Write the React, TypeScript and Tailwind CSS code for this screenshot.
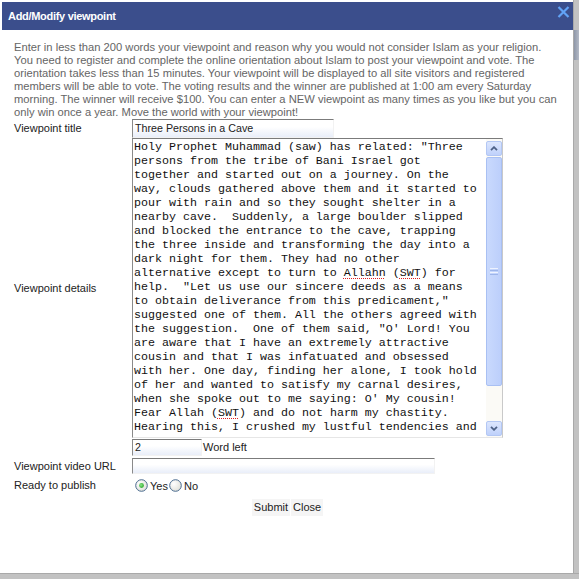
import React from "react";

const SP = ({ children }: { children: React.ReactNode }) => (
  <span className="underline decoration-dotted decoration-[#e02020] underline-offset-[2px]">{children}</span>
);

const textLines: React.ReactNode[] = [
  'Holy Prophet Muhammad (saw) has related: "Three',
  "persons from the tribe of Bani Israel got",
  "together and started out on a journey. On the",
  "way, clouds gathered above them and it started to",
  "pour with rain and so they sought shelter in a",
  "nearby cave.  Suddenly, a large boulder slipped",
  "and blocked the entrance to the cave, trapping",
  "the three inside and transforming the day into a",
  "dark night for them. They had no other",
  <>alternative except to turn to <SP>Allahn</SP> (<SP>SWT</SP>) for</>,
  'help.  "Let us use our sincere deeds as a means',
  'to obtain deliverance from this predicament,"',
  "suggested one of them. All the others agreed with",
  'the suggestion.  One of them said, "O\' Lord! You',
  "are aware that I have an extremely attractive",
  "cousin and that I was infatuated and obsessed",
  "with her. One day, finding her alone, I took hold",
  "of her and wanted to satisfy my carnal desires,",
  "when she spoke out to me saying: O' My cousin!",
  <>Fear Allah (<SP>SWT</SP>) and do not harm my chastity.</>,
  "Hearing this, I crushed my lustful tendencies and",
];

const intro = [
  "Enter in less than 200 words your viewpoint and reason why you would not consider Islam as your religion.",
  "You need to register and complete the online orientation about Islam to post your viewpoint and vote. The",
  "orientation takes less than 15 minutes. Your viewpoint will be displayed to all site visitors and registered",
  "members will be able to vote. The voting results and the winner are published at 1:00 am every Saturday",
  "morning. The winner will receive $100. You can enter a NEW viewpoint as many times as you like but you can",
  "only win once a year. Move the world with your viewpoint!",
];

function ScrollBtn({ up }: { up?: boolean }) {
  return (
    <div className="h-[15px] rounded-[2px] border border-[#b3c7f4] bg-gradient-to-b from-[#dce6fd] to-[#bfd1fb] flex items-center justify-center">
      <svg width="8" height="5" viewBox="0 0 8 5">
        {up ? (
          <path d="M1 4.2 L4 1.2 L7 4.2" fill="none" stroke="#4d6185" strokeWidth="1.8" />
        ) : (
          <path d="M1 0.8 L4 3.8 L7 0.8" fill="none" stroke="#4d6185" strokeWidth="1.8" />
        )}
      </svg>
    </div>
  );
}

function Radio({ checked }: { checked?: boolean }) {
  return (
    <svg width="13" height="13" viewBox="0 0 13 13">
      <defs>
        <radialGradient id="rfill" cx="0.35" cy="0.35" r="0.8">
          <stop offset="0" stopColor="#ffffff" />
          <stop offset="1" stopColor="#dcdcd4" />
        </radialGradient>
        <radialGradient id="rdot" cx="0.4" cy="0.4" r="0.7">
          <stop offset="0" stopColor="#8ee88a" />
          <stop offset="1" stopColor="#21a121" />
        </radialGradient>
      </defs>
      <circle cx="6.5" cy="6.5" r="5.8" fill="url(#rfill)" stroke="#4b6c90" strokeWidth="1" />
      {checked && <circle cx="6.5" cy="6.5" r="2.4" fill="url(#rdot)" />}
    </svg>
  );
}

const inputCls =
  "border-t border-l border-t-[#7b7b7b] border-l-[#8a8a8a] border-r border-b border-r-[#f2f2f2] border-b-[#f2f2f2] bg-gradient-to-b from-white from-40% to-[#e9eef9]";

export default function App() {
  return (
    <div className="w-[579px] h-[579px] bg-white flex flex-col overflow-hidden font-['Liberation_Sans',Arial,sans-serif]">
      <div className="flex flex-1 min-h-0">
        <div className="w-[573px] pt-[2px] pl-[2px] flex flex-col">
          {/* title bar */}
          <div className="h-[28px] bg-[#3b4e8c] flex items-center pl-[6px] pr-[3px] justify-between">
            <span className="text-white font-bold text-[11px] tracking-[-0.3px]">Add/Modify viewpoint</span>
            <svg width="13" height="12" viewBox="0 0 13 12" className="self-start mt-[4px]">
              <path d="M1.5 1 L11.5 11 M11.5 1 L1.5 11" stroke="#62a3f7" strokeWidth="2.2" />
            </svg>
          </div>

          {/* intro */}
          <div className="pl-[12px] pt-[11px] text-[11.2px] leading-[13px] text-[#656565]">
            {intro.map((l, i) => (
              <div key={i} className="whitespace-nowrap">{l}</div>
            ))}
          </div>

          {/* form */}
          <div className="pl-[12px] grid grid-cols-[118px_1fr] text-[11px] text-[#222]">
            {/* title */}
            <div className="h-[19px] flex items-center">Viewpoint title</div>
            <div className="h-[19px]">
              <div className={`w-[202px] h-[19px] ${inputCls} pl-[2px] flex items-center text-[10.7px]`}>
                Three Persons in a Cave
              </div>
            </div>

            {/* details */}
            <div className="h-[300px] flex items-center">Viewpoint details</div>
            <div className="h-[300px]">
              <div className="w-[371px] h-[300px] border border-t-[#7b7b7b] border-l-[#8a8a8a] border-r-[#c9c9c9] border-b-[#e6e6e6] flex bg-white">
                <div className="flex-1 pl-[1px] pt-[1px] overflow-hidden font-['Liberation_Mono','Courier_New',monospace] text-[11.67px] leading-[14px] text-[#111]">
                  {textLines.map((l, i) => (
                    <div key={i} className="whitespace-pre">{l}</div>
                  ))}
                </div>
                <div className="w-[16px] flex flex-col pt-[2px] pb-[1px] bg-[#fbfaf6]">
                  <ScrollBtn up />
                  <div className="mt-[1px] h-[229px] rounded-[2px] border border-[#a9c0f3] bg-gradient-to-r from-[#c9d9fd] to-[#bccffb] flex items-center justify-center">
                    <div className="flex flex-col gap-[1px]">
                      <div className="w-[8px] h-[1px] bg-[#eef3ff]" />
                      <div className="w-[8px] h-[1px] bg-[#9db5ea]" />
                      <div className="w-[8px] h-[1px] bg-[#eef3ff]" />
                      <div className="w-[8px] h-[1px] bg-[#9db5ea]" />
                    </div>
                  </div>
                  <div className="flex-1" />
                  <ScrollBtn />
                </div>
              </div>
            </div>

            {/* word left */}
            <div className="mt-[1px] h-[17px]" />
            <div className="mt-[1px] h-[17px] flex items-center">
              <div className={`w-[70px] h-[17px] ${inputCls} pl-[2px] flex items-center text-[10.7px]`}>2</div>
              <span className="ml-[1px]">Word left</span>
            </div>

            {/* video url */}
            <div className="mt-[2px] h-[16px] flex items-center">Viewpoint video URL</div>
            <div className="mt-[2px] h-[16px]">
              <div className={`w-[303px] h-[16px] ${inputCls}`} />
            </div>

            {/* publish */}
            <div className="mt-[1px] h-[20px] flex items-center">Ready to publish</div>
            <div className="mt-[1px] h-[20px] flex items-center pl-[3px]">
              <Radio checked />
              <span className="ml-[2px] mt-[3px]">Yes</span>
              <span className="ml-[1px] flex"><Radio /></span>
              <span className="ml-[2px] mt-[3px]">No</span>
            </div>
          </div>

          {/* buttons */}
          <div className="mt-[4px] flex justify-center gap-[1px] text-[11px] text-[#222]">
            <button className="h-[17px] px-[2px] bg-[#f5f5f5]">Submit</button>
            <button className="h-[17px] px-[2px] bg-[#f5f5f5]">Close</button>
          </div>
        </div>
        {/* right strip */}
        <div className="w-[6px] bg-[#c2c2c2] border-l border-[#a9a9a9] flex flex-col">
          <div className="h-[30px]" />
          <div className="h-[30px] bg-gradient-to-r from-[#8e97a8] to-[#b4bac6]" />
        </div>
      </div>
      <div className="h-[6px] bg-[#c2c2c2] border-t border-[#a9a9a9]" />
    </div>
  );
}
